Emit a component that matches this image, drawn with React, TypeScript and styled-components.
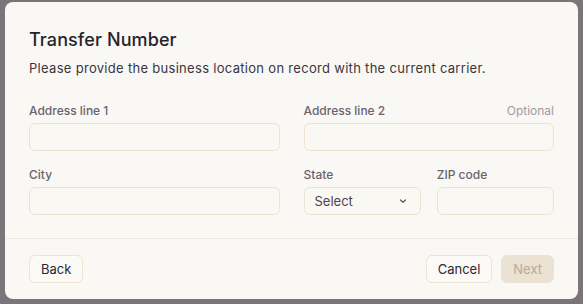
import styled, { createGlobalStyle } from "styled-components";

const GlobalStyle = createGlobalStyle`
    html, body {
        margin: 0;
        padding: 0;
        background: #7a757a;
    }
    body {
        font-family: Inter, "Noto Sans", sans-serif;
        height: 304px;
        overflow: hidden;
    }
    * {
        box-sizing: border-box;
    }
`;

const Backdrop = styled.div`
    width: 583px;
    height: 304px;
    padding: 2px 5px 0 5px;
`;

const Dialog = styled.div`
    width: 573px;
    height: 297px;
    background: #f9f8f4;
    border-radius: 8px;
    display: flex;
    flex-direction: column;
`;

const Body = styled.div`
    padding: 26px 24px 23px 24px;
    border-bottom: 1px solid #ece6dc;
`;

const Title = styled.h2`
    margin: 0;
    font-size: 18px;
    line-height: 24px;
    font-weight: 500;
    letter-spacing: 0.1px;
    color: #27232c;
`;

const Subtitle = styled.p`
    margin: 6px 0 0 0;
    font-size: 13px;
    line-height: 20px;
    letter-spacing: 0.3px;
    color: #3a3640;
`;

const Grid = styled.div`
    display: grid;
    grid-template-columns: 1fr 1fr;
    column-gap: 24px;
    row-gap: 16px;
    margin-top: 25px;
`;

const SubGrid = styled.div`
    display: grid;
    grid-template-columns: 1fr 1fr;
    column-gap: 16px;
`;

const Field = styled.div`
    display: flex;
    flex-direction: column;
    gap: 4px;
`;

const LabelRow = styled.div`
    display: flex;
    justify-content: space-between;
    font-size: 12px;
    line-height: 16px;
`;

const Label = styled.label`
    color: #69636f;
    font-weight: 500;
`;

const Hint = styled.span`
    color: #a09aa2;
`;

const Input = styled.input`
    height: 28px;
    width: 100%;
    border: 1px solid #ede3d2;
    border-radius: 6px;
    background: #faf8f3;
    padding: 0 10px;
    font: inherit;
    font-size: 13px;
    outline: none;
`;

const Select = styled.button`
    height: 28px;
    width: 100%;
    border: 1px solid #ede3d2;
    border-radius: 6px;
    background: #faf8f3;
    padding: 0 12px 0 10px;
    font: inherit;
    font-size: 13px;
    color: #4a4550;
    display: flex;
    align-items: center;
    justify-content: space-between;
`;

const Footer = styled.div`
    display: flex;
    align-items: center;
    justify-content: space-between;
    padding: 16px 24px 0 24px;
`;

const Actions = styled.div`
    display: flex;
    gap: 9px;
`;

const Button = styled.button<{ $primary?: boolean }>`
    height: 28px;
    padding: 0 11px;
    border-radius: 6px;
    font: inherit;
    font-size: 13px;
    border: 1px solid ${p => (p.$primary ? "#ebe2d3" : "#ede3d2")};
    background: ${p => (p.$primary ? "#ebe2d3" : "#fbfaf6")};
    color: ${p => (p.$primary ? "#b8aa95" : "#2c2830")};
`;

function Chevron() {
    return (
        <svg width="10" height="10" viewBox="0 0 10 10" fill="none">
            <path d="M2.5 4 L5 6.3 L7.5 4" stroke="#5c5662" strokeWidth="1.2" strokeLinecap="round" strokeLinejoin="round" />
        </svg>
    );
}

export default function App() {
    return (
        <Backdrop>
            <GlobalStyle />
            <Dialog>
                <Body>
                    <Title>Transfer Number</Title>
                    <Subtitle>Please provide the business location on record with the current carrier.</Subtitle>
                    <Grid>
                        <Field>
                            <LabelRow>
                                <Label>Address line 1</Label>
                            </LabelRow>
                            <Input />
                        </Field>
                        <Field>
                            <LabelRow>
                                <Label>Address line 2</Label>
                                <Hint>Optional</Hint>
                            </LabelRow>
                            <Input />
                        </Field>
                        <Field>
                            <LabelRow>
                                <Label>City</Label>
                            </LabelRow>
                            <Input />
                        </Field>
                        <SubGrid>
                            <Field>
                                <LabelRow>
                                    <Label>State</Label>
                                </LabelRow>
                                <Select>
                                    Select
                                    <Chevron />
                                </Select>
                            </Field>
                            <Field>
                                <LabelRow>
                                    <Label>ZIP code</Label>
                                </LabelRow>
                                <Input />
                            </Field>
                        </SubGrid>
                    </Grid>
                </Body>
                <Footer>
                    <Button>Back</Button>
                    <Actions>
                        <Button>Cancel</Button>
                        <Button $primary>Next</Button>
                    </Actions>
                </Footer>
            </Dialog>
        </Backdrop>
    );
}
